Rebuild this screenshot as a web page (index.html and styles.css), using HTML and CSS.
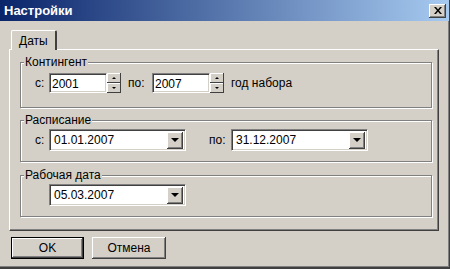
FILE: index.html
```html
<!DOCTYPE html>
<html lang="ru">
<head>
  <meta charset="UTF-8" />
  <title>Настройки</title>
  <link rel="stylesheet" href="styles.css">
</head>
<body>
  <div class="window">
    <div class="titlebar">
      <span class="title">Настройки</span>
      <button class="close-btn" aria-label="Закрыть">
        <svg width="8" height="7" viewBox="0 0 8 7">
          <path d="M0 0h2l2 2.5L6 0h2L5 3.5 8 7H6L4 4.5 2 7H0l3-3.5z" fill="#000"/>
        </svg>
      </button>
    </div>

    <div class="content">
      <div class="tabs">
        <div class="tab active">Даты</div>
      </div>

      <div class="panel">
        <div class="group group-contingent">
          <span class="group-title">Контингент</span>
          <div class="row">
            <span class="lbl">с:</span>
            <div class="spin">
              <div class="field">2001</div>
              <div class="spin-btns">
                <div class="spin-btn"><span class="arr up"></span></div>
                <div class="spin-btn"><span class="arr down"></span></div>
              </div>
            </div>
            <span class="lbl lbl-to">по:</span>
            <div class="spin">
              <div class="field">2007</div>
              <div class="spin-btns">
                <div class="spin-btn"><span class="arr up"></span></div>
                <div class="spin-btn"><span class="arr down"></span></div>
              </div>
            </div>
            <span class="lbl lbl-year">год набора</span>
          </div>
        </div>

        <div class="group group-schedule">
          <span class="group-title">Расписание</span>
          <div class="row">
            <span class="lbl">с:</span>
            <div class="combo">
              <span class="combo-text">01.01.2007</span>
              <div class="combo-btn"><span class="arr big"></span></div>
            </div>
            <span class="lbl lbl-to2">по:</span>
            <div class="combo">
              <span class="combo-text">31.12.2007</span>
              <div class="combo-btn"><span class="arr big"></span></div>
            </div>
          </div>
        </div>

        <div class="group group-workdate">
          <span class="group-title">Рабочая дата</span>
          <div class="row row-indent">
            <div class="combo">
              <span class="combo-text">05.03.2007</span>
              <div class="combo-btn"><span class="arr big"></span></div>
            </div>
          </div>
        </div>
      </div>

      <div class="buttons">
        <button class="btn btn-default">OK</button>
        <button class="btn">Отмена</button>
      </div>
    </div>
  </div>
</body>
</html>
```

FILE: styles.css
```css
* {
  margin: 0;
  padding: 0;
  box-sizing: border-box;
}

body {
  font-family: 'Liberation Sans', Arial, sans-serif;
  font-size: 12px;
  color: #000;
  background: #d4d0c8;
}

.window {
  width: 450px;
  height: 269px;
  background: #d4d0c8;
  border-right: 1px solid #404040;
  border-bottom: 2px solid #404040;
  box-shadow: inset -1px -1px 0 #808080;
}

/* Title bar */
.titlebar {
  height: 21px;
  display: flex;
  align-items: center;
  justify-content: space-between;
  padding: 0 3px 0 4px;
  background: linear-gradient(to right, #0a246a, #a6caf0);
}

.title {
  color: #fff;
  font-weight: bold;
  font-size: 13px;
}

.close-btn {
  width: 17px;
  height: 14px;
  display: flex;
  align-items: center;
  justify-content: center;
  background: #d4d0c8;
  border: none;
  box-shadow: inset -1px -1px 0 #404040, inset 1px 1px 0 #fff, inset -2px -2px 0 #808080;
}

.content {
  padding: 8px 10px 0 9px;
}

/* Tabs */
.tabs {
  display: flex;
  padding-left: 2px;
}

.tab {
  height: 20px;
  width: 46px;
  padding: 3px 0 0 7px;
  border-top: 1px solid #fff;
  border-left: 1px solid #fff;
  border-right: 2px solid #404040;
  border-radius: 2px 2px 0 0;
  position: relative;
  top: 1px;
  background: #d4d0c8;
}

.panel {
  height: 182px;
  border-top: 1px solid #fff;
  border-left: 1px solid #fff;
  border-right: 1px solid #404040;
  border-bottom: 1px solid #404040;
  box-shadow: inset -1px -1px 0 #808080;
  padding: 12px 6px 0 10px;
}

/* Group boxes */
.group {
  position: relative;
  border: 1px solid #808080;
  box-shadow: inset 1px 1px 0 #fff, 1px 1px 0 #fff;
  padding: 10px 0 0 14px;
}

.group-contingent {
  height: 46px;
}

.group-schedule {
  height: 42px;
  margin-top: 12px;
  padding-top: 8px;
}

.group-workdate {
  height: 42px;
  margin-top: 13px;
  padding-top: 8px;
}

.group-title {
  position: absolute;
  top: -8px;
  left: 3px;
  padding: 0 1px;
  background: #d4d0c8;
  line-height: 14px;
}

.row {
  display: flex;
  align-items: center;
}

.row-indent {
  padding-left: 14px;
}

.lbl {
  width: 14px;
}

.lbl-to {
  width: 24px;
  margin-left: 7px;
}

.lbl-to2 {
  width: 22px;
  margin-left: 23px;
}

.lbl-year {
  width: auto;
  margin-left: 7px;
}

/* Sunken fields */
.field,
.combo {
  background: #fff;
  border-top: 1px solid #808080;
  border-left: 1px solid #808080;
  border-right: 1px solid #fff;
  border-bottom: 1px solid #fff;
  box-shadow: inset 1px 1px 0 #404040, inset -1px -1px 0 #d4d0c8;
}

.spin {
  display: flex;
}

.field {
  width: 58px;
  height: 20px;
  padding: 3px 0 0 2px;
}

.spin-btns {
  width: 14px;
  height: 20px;
  display: flex;
  flex-direction: column;
}

.spin-btn {
  flex: 1;
  display: flex;
  align-items: center;
  justify-content: center;
  background: #d4d0c8;
  box-shadow: inset -1px -1px 0 #404040, inset 1px 1px 0 #fff;
}

.arr {
  width: 0;
  height: 0;
  border-left: 2px solid transparent;
  border-right: 2px solid transparent;
}

.arr.up {
  border-bottom: 2px solid #000;
}

.arr.down {
  border-top: 2px solid #000;
}

.arr.big {
  border-left-width: 4px;
  border-right-width: 4px;
  border-top: 4px solid #000;
}

.combo {
  width: 137px;
  height: 22px;
  display: flex;
  align-items: center;
  justify-content: space-between;
  padding: 2px;
}

.combo-text {
  padding-left: 2px;
}

.combo-btn {
  width: 16px;
  height: 17px;
  display: flex;
  align-items: center;
  justify-content: center;
  background: #d4d0c8;
  box-shadow: inset -1px -1px 0 #404040, inset 1px 1px 0 #fff, inset -2px -2px 0 #808080;
}

/* Dialog buttons */
.buttons {
  display: flex;
  gap: 8px;
  padding: 6px 0 0 2px;
}

.btn {
  width: 74px;
  height: 22px;
  font-family: inherit;
  font-size: 12px;
  background: #d4d0c8;
  border: none;
  box-shadow: inset -1px -1px 0 #404040, inset 1px 1px 0 #fff, inset -2px -2px 0 #808080;
}

.btn-default {
  width: 73px;
  border: 1px solid #000;
}
```
